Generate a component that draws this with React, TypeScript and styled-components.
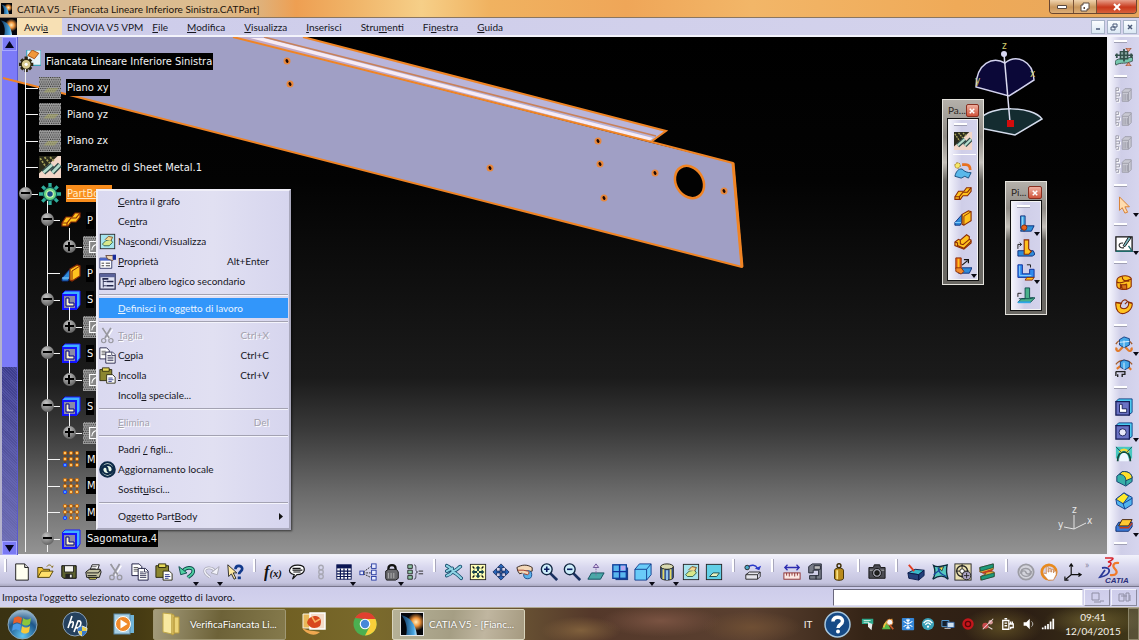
import React, { ReactNode } from 'react';
import styled, { createGlobalStyle, css } from 'styled-components';

const ui = `Lato, "Noto Sans", sans-serif`;
const treeFont = `"DejaVu Sans Condensed", "DejaVu Sans", sans-serif`;

const GlobalStyle = createGlobalStyle`
  * { box-sizing: border-box; }
  html, body { margin: 0; height: 100%; }
  #root { height: 100%; }
  body { font-family: ${ui}; font-size: 10px; color: #16161e; overflow: hidden; background: #000; }
  button { font: inherit; color: inherit; background: none; border: 0; padding: 0; margin: 0; }
  u { text-underline-offset: 1px; }
`;

/* ---------- icon artwork, 20 x 20 unless noted ---------- */

const O = '#8a2b06';
const Y = '#ffc21e';

const gridDots = (
  <g fill="#f6b04a" stroke="#7a3f08" strokeWidth="1">
    <path d="M4 4v12M10 4v12M16 4v12M4 4h12M4 10h12" fill="none" />
    {[4, 10, 16].map((x) => [4, 10, 16].map((y) => (
      <circle key={`${x}-${y}`} cx={x} cy={y} r="1.7" fill={x === 4 && y === 16 ? '#4aa0ff' : '#ffc464'} stroke={x === 4 && y === 16 ? '#1a3cff' : '#c06a14'} />
    )))}
  </g>
);

const speck = (
  <g>
    <rect width="20" height="20" fill="#9a9a9a" />
    <g stroke="#3e3e3e" strokeDasharray="1 1">
      {[0, 2, 4, 6, 8, 10, 12, 14, 16, 18].map((y) => <path key={y} d={`M${(y / 2) % 2} ${y + 0.5}h20`} />)}
    </g>
  </g>
);

const ghostBox = (
  <g fill="none" stroke="#9c9ca8">
    <path d="M8 6l3-3h7v11l-3 3H8z" fill="#c8c8d2" /><path d="M15 17V7l3-3M15 7H8" />
    <path d="M10 9v7M12 9v7M14 9v7" /><path d="M2 3v14M2 3h3v3H2M2 9h4v3H2M2 15h3v3H2" stroke="#fff" />
    <path d="M1 2v14M1 2h3v3H1M1 8h4v3H1M1 14h3v3H1" />
  </g>
);

const lBlock = (a: string, b: string) => (
  <g strokeWidth="1">
    <path d="M4 1h5v10l2 2-3 5-4-3z" fill={a} stroke="#0a2a78" />
    <path d="M8 12h11l-3 6H4l1-3z" fill={b} stroke="#0a2a78" />
    <path d="M6 2v11" stroke="#fff" opacity=".5" />
    <circle cx="8" cy="14" r="3" fill="#e8641c" stroke={O} />
  </g>
);

const art: Record<string, ReactNode> = {
  newFile: <g><path d="M3 1h10l4 4v14H3z" fill="#fffff0" stroke="#111" /><path d="M13 1v4h4" fill="#ddd" stroke="#111" /></g>,
  open: <g stroke="#4a3a00"><path d="M2 16V5h5l1 2h7v3" fill="#f3c63a" /><path d="M2 16l4-7h13l-4 7z" fill="#ffe06a" /><path d="M12 4c2-3 5-2 6 1l1-2" fill="none" stroke="#7a6000" /></g>,
  save: <g><path d="M2 3h16v14H4l-2-2z" fill="#5d6230" stroke="#000" /><path d="M5 3h10v7H5z" fill="#f4f4ee" stroke="#222" /><path d="M6 12h8v5H6z" fill="#222" /><path d="M11 13h2v3h-2z" fill="#eee" /></g>,
  print: <g stroke="#111"><path d="M7 7l2-5h8l-2 6z" fill="#fff" /><path d="M9 4h5M8 6h5" stroke="#666" /><path d="M2 10l4-3h12l1 3-2 6H3z" fill="#c4c2a2" /><path d="M3 11h13l2-3M4 14h10" fill="none" /><path d="M5 16h10l-2 2H6z" fill="#e8e060" /></g>,
  cutOff: <g fill="none" stroke="#fff" strokeWidth="1.4"><path d="M5 2l7 11M15 2L8 13" transform="translate(1 1)" /><g stroke="#98989f"><path d="M4 1l8 12M14 1L7 13" strokeWidth="2" /><circle cx="5.500" cy="16" r="2.500" /><circle cx="14" cy="16" r="2.500" /></g></g>,
  copy: <g fill="#fff" stroke="#15153a"><path d="M1 1h8l3 3v10H1z" /><path d="M3 5h5M3 7h5M3 9h5" stroke="#555" /><path d="M8 6h8l3 3v10H8z" /><path d="M15 6v4h4M10 10h4M10 12h7M10 14h7M10 16h7" stroke="#335" /></g>,
  paste: <g stroke="#26240a"><path d="M1 3h14v13H1z" fill="#8b8630" /><path d="M4 1h8v4H4z" fill="#e6d95a" /><path d="M9 9h7l3 3v7H9z" fill="#fff" /><path d="M11 13h5M11 15h6M11 17h4" stroke="#24308a" /></g>,
  undo: <g fill="none"><path d="M5 10c3-6 12-6 12-1 0 4-4 5-6 7" stroke="#0c4a4a" strokeWidth="4" /><path d="M5 10c3-6 12-6 12-1 0 4-4 5-6 7" stroke="#4fd0a2" strokeWidth="2" /><path d="M1 4l2 9 7-2z" fill="#4fd0a2" stroke="#0c4a4a" /></g>,
  redoOff: <g fill="none"><path d="M15 10C12 4 3 4 3 9c0 4 4 5 6 7" stroke="#a6a6b2" strokeWidth="3" /><path d="M15 10C12 4 3 4 3 9c0 4 4 5 6 7" stroke="#f2f2fa" strokeWidth="1.500" /><path d="M19 4l-2 9-7-2z" fill="#f2f2fa" stroke="#a6a6b2" /></g>,
  help: <g><path d="M2 2l1 13 3-3 3 6 2-1-3-6h4z" fill="#ffe9a0" stroke="#222" /><path d="M10.500 7c0-5 7.500-5 7.500-.5 0 3-3.500 3-3.500 6" fill="none" stroke="#123a8c" strokeWidth="3" /><path d="M13 15h3.500v3H13z" fill="#123a8c" /></g>,
  fx: <text x="0" y="15" fontFamily="Liberation Serif, serif" fontStyle="italic" fontSize="18" fontWeight="700" fill="#111">f<tspan fontSize="12">(x)</tspan></text>,
  comment: <g stroke="#111" strokeWidth="1.300"><path d="M7 13c-5-1-6-4-5-6 2-6 15-6 16-1 1 5-4 7-8 7l-5 5z" fill="#fff" /><path d="M5 6h9M5 8h11M6 10h8" /></g>,
  linkOff: <g fill="none" stroke="#a8a8b4" strokeWidth="1.500"><circle cx="10" cy="5" r="2.500" /><circle cx="10" cy="10" r="2.500" /><circle cx="10" cy="15" r="2.500" /></g>,
  table: <g><rect x="2" y="2" width="16" height="16" fill="#fff" stroke="#0b1654" /><rect x="2" y="2" width="16" height="4" fill="#0b1654" /><path d="M2 9h16M2 12h16M2 15h16M6 6v12M10 6v12M14 6v12" stroke="#0b1654" strokeWidth="1.300" /></g>,
  graph: <g fill="#e8ecff" stroke="#2338a0"><path d="M5 11h8M5 10l8-6M5 12l8 4" stroke="#222" strokeDasharray="2 1" /><rect x="1" y="9" width="4" height="4" /><rect x="14" y="1" width="5" height="5" /><rect x="14" y="8" width="5" height="5" /><rect x="14" y="15" width="5" height="4" /></g>,
  lock: <g stroke="#111"><path d="M6 9V6c0-5 8-5 8 0v3" fill="none" strokeWidth="2.500" /><path d="M3 9l3-2h9l2 3v7l-3 2H4l-1-2z" fill="#6a6a6e" /><path d="M6 11v6M9 11v6M12 11v6" stroke="#b8b8b8" /></g>,
  equal: <g fill="#8fc7a8" stroke="#222"><path d="M2 2h5v4H2zM2 8h5v4H2zM2 14h5v4H2z" /><path d="M9 2c4 0 0 8 4 8-4 0 0 8-4 8" fill="none" stroke="#445" /><path d="M14 9h5M14 12h5" /></g>,
  fly: <g><path d="M2 3c3 1 5 4 7 6 3 0 5-3 8-5M9 9c-2 3-4 4-7 5M9 10c3 1 6 4 9 7M8 6l-6 3" fill="none" stroke="#114a6a" strokeWidth="4" strokeLinecap="round" /><path d="M2 3c3 1 5 4 7 6 3 0 5-3 8-5M9 9c-2 3-4 4-7 5M9 10c3 1 6 4 9 7M8 6l-6 3" fill="none" stroke="#8fd4e4" strokeWidth="2.200" strokeLinecap="round" /></g>,
  fit: <g><rect x="1.500" y="1.500" width="17" height="17" fill="#ffffb4" stroke="#222" /><path d="M10 3l3 3h-2v3H9V6H7zM10 17l-3-3h2v-3h2v3h2zM3 10l3-3v2h3v2H6v2zM17 10l-3 3v-2h-3V9h3V7z" fill="#14404a" /><path d="M4 4l2 2M16 4l-2 2M4 16l2-2M16 16l-2-2" stroke="#111" strokeWidth="1.500" /></g>,
  pan: <g fill="#2a66b8" stroke="#0a1e50" strokeWidth=".8"><path d="M10 1l4 4h-3v4H9V5H6zM10 19l-4-4h3v-4h2v4h3zM1 10l4-4v3h4v2H5v3zM19 10l-4 4v-3h-4V9h4V6z" /></g>,
  rotate: <g stroke="#2a1a10"><path d="M1 5c5-3 11-4 17 0v4l-8 1-6 2-2-3z" fill="#f3d8b8" /><circle cx="13" cy="13" r="4.500" fill="#5ab0e8" stroke="#114a8a" /><path d="M2 8h6l5 1c2 1 2 3 0 4l-4-1" fill="#f3d8b8" stroke="#a03020" /></g>,
  zoomIn: <g><path d="M11 11l8 8" stroke="#1a3060" strokeWidth="3" /><circle cx="7.500" cy="7" r="6" fill="#cdeefa" stroke="#0f2440" strokeWidth="1.500" /><path d="M4.500 7h6M7.500 4v6" stroke="#0b1a60" strokeWidth="1.800" /></g>,
  zoomOut: <g><path d="M11 11l8 8" stroke="#1a3060" strokeWidth="3" /><circle cx="7.500" cy="7" r="6" fill="#cdeefa" stroke="#0f2440" strokeWidth="1.500" /><path d="M4.500 7h6" stroke="#0b1a60" strokeWidth="1.800" /></g>,
  normal: <g><path d="M1 18l4-7h14l-4 7z" fill="#4aa8a8" stroke="#0f4a5a" /><path d="M10 14V5" stroke="#806aa0" strokeDasharray="2 1" /><path d="M7 5l3-4 3 4z" fill="#e8d0f0" stroke="#604a90" /></g>,
  multi: <g><path d="M5 5h14v14H5z" fill="#1b3f86" /><rect x="2" y="2" width="15" height="15" fill="#59b6ee" stroke="#10409a" strokeWidth="1.500" /><path d="M9.500 2v15M2 9.500h15" stroke="#10309a" strokeWidth="1.500" /><path d="M11 3h5v5h-5z" fill="#b8a8f0" /></g>,
  cube: <g fill="#6acbf8" stroke="#0d3a8c"><path d="M1 7l5-6h13v12l-5 6H1z" /><path d="M1 7h13v12M14 7l5-6" fill="none" /></g>,
  shade: <g stroke="#1a1a10"><path d="M3 4v12c0 4 14 4 14 0V4" fill="#3a5a9a" /><ellipse cx="10" cy="4" rx="7" ry="3" fill="#d8d8b0" /><path d="M6 7v11M14 7v11" stroke="#e4d860" strokeWidth="2" /><path d="M10 8v11" stroke="#9ad0f0" strokeWidth="2" /></g>,
  hide: <g><rect x="1.500" y="1.500" width="17" height="17" fill="#a6e4ee" stroke="#222" /><path d="M4 13l4-4 6-1 2 3-4 4H6z" fill="#d8e88a" stroke="#245a4a" /><path d="M7 8l4-4 5 1-2 4" fill="#f0d890" stroke="#7a4a20" /></g>,
  swap: <g><rect x="1.500" y="1.500" width="17" height="17" fill="#62cfe6" stroke="#222" /><path d="M5 15l4-4h7l-3 4z" fill="#e8f0c0" stroke="#1a4a4a" /></g>,
  turntable: <g stroke="#222"><path d="M2 13l4-3h12l-3 3zM2 13v5h13v-5M15 18l3-3v-5" fill="#e4e4ea" /><path d="M4 5c4-4 9-3 11 1" fill="none" stroke="#2a3ac8" strokeWidth="1.500" /><circle cx="3.500" cy="5" r="2.500" fill="#49a8c8" /><path d="M12 6l5 2 2-5z" fill="#2a3ac8" stroke="none" /></g>,
  measure: <g><path d="M2 5h16M5 2L2 5l3 3M15 2l3 3-3 3" fill="none" stroke="#2b2bb0" strokeWidth="1.400" /><rect x="1" y="11" width="18" height="7" fill="#fbe8e4" stroke="#8a2a2a" /><path d="M4 11v3M7 11v4M10 11v3M13 11v4M16 11v3" stroke="#8a2a2a" /></g>,
  caliper: <g fill="#767a86" stroke="#1e2230"><path d="M3 4l4-3h10v17h-6v-4h3V8H8v3H3z" /><path d="M9 3h7v4H9z" fill="#bbb" /><path d="M4 14h7v4H4z" /></g>,
  weight: <g stroke="#3a2a00"><circle cx="10" cy="3" r="2.200" fill="none" strokeWidth="1.500" /><path d="M5 8c0-3 10-3 10 0v9c0 3-10 3-10 0z" fill="#b98a1c" /><path d="M8 8v10" stroke="#f8e080" strokeWidth="2" /></g>,
  camera: <g stroke="#111"><path d="M1 5h5l1-3h6l1 3h5v12H1z" fill="#4a4a52" /><path d="M2 8h16" stroke="#b8b8b8" /><circle cx="10" cy="11" r="5" fill="#9a9aa6" /><circle cx="10" cy="11" r="2.500" fill="#222" /></g>,
  mat: <g stroke="#0a1a4a"><path d="M1 11l8-4 10 1-6 5z" fill="#3ab8c8" /><path d="M1 11l12 2v6L2 17zM13 13l6-5v6l-6 5z" fill="#24407a" /><path d="M2 2l6 7" stroke="#e03a20" strokeWidth="2" /></g>,
  surf: <g stroke="#0c2a3a" strokeWidth="1.500"><path d="M3 3c5 3 9 0 15-1-1 4-1 10 1 16-5-5-11-4-17 0 3-5 3-10 1-15z" fill="#55c8c0" /><path d="M8 5c0 5 3 7 9 10M3 13l11-9" fill="none" stroke="#1a4aa0" /><path d="M9 5l5-1-2 5z" fill="#f4e050" strokeWidth=".8" /></g>,
  analysis: <g stroke="#222"><rect x="1" y="1" width="18" height="18" fill="#ece2b4" /><circle cx="9" cy="9" r="6" fill="none" strokeWidth="1.500" /><path d="M9 1v16M2 9h15" /><circle cx="9" cy="9" r="2.500" fill="#fff" /><circle cx="14" cy="14" r="4.500" fill="#b0a8c8" /><path d="M11 14h6M14 11v6" /></g>,
  draft: <g strokeWidth=".8"><path d="M2 5l15-4v6l-6 2 7 1v5L3 19v-4l6-3-7-2z" fill="#e0b23a" stroke="#5a3a10" /><path d="M2 5l15-4v4L3 9zM3 15l15-4v4L4 19z" fill="#1e9a7a" stroke="#0c4a40" /><path d="M5 11l11-3" stroke="#c83a20" strokeWidth="2" /></g>,
  updOff: <g fill="none" stroke="#9c9ca4" strokeWidth="2"><circle cx="10" cy="10" r="8.500" fill="#d4d4dc" /><path d="M4 12c0-8 11-7 11-2 0 3-5 3-5 0M16 9c0 8-11 7-11 2 0-3 5-3 5 0" strokeWidth="1.500" /></g>,
  hand: <g><circle cx="10" cy="10" r="8" fill="none" stroke="#e88a1e" strokeWidth="3" /><path d="M7 12V4h2v6h1V6h2v4h1V7h2v4l1-2h2v4l-3 6H9l-5-6 1-2z" fill="#fff" stroke="#c87a3a" strokeWidth=".8" /></g>,
  axis: <g fill="none" stroke="#111" strokeWidth="1.300"><path d="M8 1v12h11M8 13l-6 5M6 4l2-3 2 3M16 11l3 2-3 2M1 15v4h4" /></g>,

  /* vertical toolbars */
  sheet: <g stroke="#33504a"><path d="M0 15c5-6 10 0 19-6l1 5c-9 5-13 1-19 5z" fill="#77c7ae" /><path d="M0 8h20M6 4h8v8H6z" fill="#8aa8a4" strokeWidth="1.600" /><path d="M2 6v5M18 6v5M10 1v14" strokeWidth="2" /><path d="M12 0h6l-3 4zM12 20h6l-3-4z" fill="#e8a08a" stroke="#8a3a1a" strokeWidth=".8" /></g>,
  ghostBox,
  arrow: <path d="M5 1v15l3-3 3 6 3-1-3-6h5z" fill="#ffdcae" stroke="#d87a28" />,
  sketch: <g><path d="M1 2h18v16H1z" fill="#fff" stroke="#111" strokeWidth="1.400" /><path d="M1 18h18l-4-6" fill="none" stroke="#1e6a6a" strokeWidth="1.500" /><path d="M9 9c-7-1-5 7 1 5" fill="none" stroke="#333" strokeWidth="1.300" /><path d="M9 12l6-10 3 1-7 10z" fill="#7ab8c0" stroke="#111" /></g>,
  hopper: <g fill={Y} stroke={O} strokeWidth="1.200"><path d="M2 9c0-6 12-8 16-3v9c-4 5-16 4-16-1z" /><path d="M2 10c4 3 8-1 16-3M8 4c0 4 2 5 8 5M6 12v5l7-5" fill="none" /><path d="M7 13h6v5H8z" fill="#d8741a" /></g>,
  rolled: <g fill={Y} stroke={O} strokeWidth="1.200"><path d="M1 6c-1 9 4 14 10 12 5-1 9-7 8-11l-4-1c1 4-2 7-5 7-4 0-5-2-3-6z" /><path d="M1 6l6 1c1-4 5-5 7-2l-3 3M14 5l5 2" fill="none" /></g>,
  fold: <g><path d="M1 9c3-5 6-5 9-5s6 0 9 5" fill="none" stroke="#a05a2a" strokeWidth="1.500" /><path d="M2 13c-2 3 2 5 4 2l3-3M18 13c2 3-2 5-4 2l-3-3" fill="none" stroke="#e07a2a" strokeWidth="2.500" /><path d="M5 4l5-3 6 2v7l-6 3-5-3z" fill="#46a8e8" stroke="#103a80" /><path d="M10 5v8M5 7l11-1" stroke="#e4f4ff" /></g>,
  foldView: <g><path d="M2 11l4-3M18 12l-4-4" fill="none" stroke="#e07a2a" strokeWidth="2.500" /><path d="M1 6c4-6 14-6 18 0" fill="none" stroke="#a05a2a" strokeWidth="1.500" /><path d="M6 3l4-2 6 2v6l-5 3-5-3z" fill="#46a8e8" stroke="#103a80" /><path d="M10 4v8" stroke="#e4f4ff" /><path d="M1 14h10v3H8v3M3 17v3M1 14v5" fill="none" stroke="#222" strokeWidth="1.500" /></g>,
  cutout: <g><path d="M1 4l3-3h15v15l-4 3z" fill="#4fd0f4" stroke="#0a3a80" /><rect x="1" y="4" width="15" height="15" fill="#6a72c4" stroke="#141c58" strokeWidth="1.400" /><path d="M5 7h3v5h5v4H5z" fill="#fff" stroke="#141c58" /></g>,
  holeCut: <g><path d="M1 4l3-3h15v15l-4 3z" fill="#4fd0f4" stroke="#0a3a80" /><rect x="1" y="4" width="15" height="15" fill="#6a72c4" stroke="#141c58" strokeWidth="1.400" /><circle cx="8.500" cy="11.500" r="4" fill="#e8e8fa" stroke="#141c58" /></g>,
  corner: <g><path d="M1 2h18v13H1z" fill="#48c8c0" /><path d="M3 18c0-7 3-10 7-10s7 3 7 10" fill="none" stroke="#114a3a" strokeWidth="2" /><path d="M5 18c0-7 2-9 5-9s5 2 5 9z" fill="#eef6ff" /><path d="M5 8c3-4 7-4 10 0" fill="none" stroke="#f4d83a" strokeWidth="2.500" /><path d="M1 2l6 6M19 2l-6 6" stroke="#1a4a5a" /></g>,
  round: <g stroke="#0c3a6a"><path d="M2 8l6-5c7-1 11 3 11 7v4l-7 5-10-5z" fill="#37b0a8" /><path d="M8 3c7-1 11 3 11 7l-7 3c0-4-2-7-7-7z" fill="#ffe02a" /><path d="M12 13v5" /></g>,
  chamfer: <g stroke="#0c3a8a"><path d="M1 8l9-7 9 5v8l-8 5-9-5z" fill="#52b4ee" /><path d="M1 8l9-7 5 4-6 8z" fill="#ffe92a" /><path d="M9 13l10-6M9 13l2 6" /></g>,
  stamp: <g stroke="#3a1a0a"><path d="M1 12l3-5h15v5l-4 5H1z" fill="#3a7ad8" stroke="#0c2a6a" /><path d="M4 11l4-7h11l-4 7z" fill="#ffc832" /><path d="M5 13h10l4-5" fill="none" stroke="#c83a1a" strokeWidth="1.500" /></g>,

  /* palettes */
  params: <g><path d="M0 0h20v20H0z" fill="#f2d6c8" /><path d="M0 0h17L0 16z" fill="#2a2a1c" /><path d="M1 2l6 9M5 1l6 7M10 1l4 4" stroke="#a8a45a" strokeDasharray="2 1" strokeWidth="1.500" /><path d="M4 15L12 8M12 15L19 8" stroke="#2f4a48" strokeWidth="5" /><path d="M4 15L12 8M12 15L19 8" stroke="#b4dccc" strokeWidth="2.500" /></g>,
  recognise: <g stroke="#114a7a"><path d="M1 17c1-5 4-9 8-8 3 3 6 4 10 4l-3 6-4-2-4 2z" fill="#5ab8ea" /><path d="M9 4h4c4 0 5 3 5 6" fill="none" stroke="#e8701e" strokeWidth="3" /><circle cx="4" cy="5" r="3" fill="#f6e86a" stroke="#8a5a10" strokeDasharray="2 1" /></g>,
  wall: <g fill={Y} stroke={O} strokeWidth="1.200"><path d="M1 13l4-6h6l3-4h5v4l-4 5h-5l-3 4H1z" /><path d="M1 13h5l4-5h5l4-5M6 13v3" fill="none" /></g>,
  wallEdge: <g><path d="M1 15L9 6v8l-2 4H1z" fill="#2e8ad8" stroke="#0c2a78" /><path d="M1 15h7" stroke="#8ad0ff" /><path d="M9 6l7-4 3 1v10l-8 5-2-1z" fill={Y} stroke={O} strokeWidth="1.200" /><path d="M11 18V8l8-5" fill="none" stroke={O} /></g>,
  extrude: <g fill={Y} stroke={O} strokeWidth="1.200"><path d="M1 10l4-3 2 1 7-6 3 2v3l2 1v3l-8 7-10-4z" /><path d="M1 10l3 1v3l7 3 8-8M7 8v4l3 1 7-6" fill="none" /></g>,
  bend: <g><path d="M2 1h6v12H2z" fill="#e8641c" stroke={O} /><path d="M5 2v11" stroke={Y} strokeWidth="2" /><path d="M9 12h11l-3 6H5z" fill="#2e8ad8" stroke="#0c2a78" /><path d="M2 12l6 0 3 4-3 3-6-3z" fill="#f08a2a" stroke={O} /><path d="M9 9l6-5M11 3h5v4" fill="none" stroke="#111" strokeWidth="1.300" /></g>,
  bend1: lBlock('#4ab0ea', '#2e90d8'),
  bend2: <g><path d="M1 13h17l2 4-3 2H1z" fill="#2e8ad8" stroke="#0c2a78" /><path d="M8 1h5v10l3 3-3 3H8z" fill={Y} stroke={O} strokeWidth="1.200" /><path d="M1 11V6h4M3 4l2 2-2 2" fill="none" stroke="#111" /></g>,
  bend3: <g stroke="#0c2a98"><path d="M1 2h5v10h8V7h5v9H1z" fill="#2e8aee" /><path d="M3 3v11h13" fill="none" stroke="#9ad8ff" /><path d="M11 16h8l-2 3h-8z" fill={Y} stroke={O} /><path d="M11 2h4v3" fill="none" stroke="#111" /></g>,
  bend4: <g stroke="#0c4a4a"><path d="M9 1h5v11h6l-5 5H1l4-4h4z" fill="#48b08a" /><path d="M2 13h12l4-1" fill="none" /><path d="M1 17h14" stroke="#2ea8e8" strokeWidth="2" /><path d="M1 11V7h4" fill="none" stroke="#111" /></g>,

  /* menu + tree */
  props: <g><path d="M1 6h14v12H1z" fill="#fff" stroke="#222a5a" /><path d="M1 6h14v3H1z" fill="#4a64c8" /><path d="M3 12h3M8 12h5M3 15h3M8 15h5" stroke="#222" /><path d="M8 3h8l3 3-3 3-6-2z" fill="#f0d8b8" stroke="#5a3a2a" /><path d="M16 2h4v6h-4z" fill="#1a2a9a" /></g>,
  subtree: <g><rect x="1" y="1" width="18" height="18" fill="#dfe2f4" stroke="#22264a" strokeWidth="1.400" /><path d="M1 1h18v4H1z" fill="#5a629a" /><path d="M5 7v10M5 10h4M5 15h4" stroke="#22264a" /><path d="M4 6h7v2H4zM9 9h8v2H9zM9 14h8v2H9z" fill="#22264a" /></g>,
  update: <g fill="none"><circle cx="10" cy="10" r="8.500" fill="#e8f8e8" stroke="#0d2a48" strokeWidth="2.500" /><path d="M3 13c-1-9 11-11 13-4 1 5-6 6-6 1M17 7c1 9-11 11-13 4-1-5 6-6 6-1" stroke="#0d2a48" strokeWidth="2.500" /></g>,
  planeTint: <g>{speck}<path d="M4 14l4-4h10l-4 4z" fill="#a8a860" opacity=".55" /></g>,
  gearGreen: <g><g stroke="#2fae9c" strokeWidth="3"><path d="M10 0v20M0 10h20M3 3l14 14M17 3L3 17" /></g><circle cx="10" cy="10" r="6" fill="#6cd888" stroke="#0e5a5a" /><circle cx="10" cy="10" r="3" fill="#1a4a8a" stroke="#d8ffb0" /></g>,
  root: <g><path d="M7 0h13v14H7z" fill="#e8f4fa" stroke="#3aa0b8" /><path d="M8 5l4-5 6 3-4 5z" fill="#f0983a" stroke="#a04a10" strokeWidth=".8" /><g stroke="#2a2410" strokeWidth="3"><path d="M6.500 6v14M0 13h13M2 8.500l9 9M11 8.500l-9 9" /></g><circle cx="6.500" cy="13" r="4.500" fill="#d8ca90" stroke="#2a2410" /><circle cx="6.500" cy="13" r="1.500" fill="#fff" /></g>,
  sketchPlane: <g>{speck}<path d="M6 5h10v10H6z" fill="#888" stroke="#fff" /><path d="M8 13c0-4 3-5 6-6" fill="none" stroke="#fff" /></g>,
  sago: <g><path d="M1 4l3-3h15v14l-3 4z" fill="#3fb0ff" stroke="#1a1aff" /><rect x="2" y="5" width="13" height="14" fill="#8a8aa8" stroke="#1414ff" strokeWidth="2" /><path d="M5 8h3v5h5v3H5z" fill="#fff8c8" stroke="#000080" /></g>,
  pattern: gridDots,
};

const Svg = styled.svg<{ $w?: number; $h?: number }>`
  display: block;
  flex: none;
  width: ${(p) => p.$w ?? 18}px;
  height: ${(p) => p.$h ?? p.$w ?? 18}px;
`;

const Icon = ({ name, w, h }: { name: string; w?: number; h?: number }) => (
  <Svg $w={w} $h={h} viewBox="0 0 20 20" aria-hidden="true">{art[name]}</Svg>
);

/* ---------- shell ---------- */

const Shell = styled.div`
  display: flex;
  flex-direction: column;
  width: 100%;
  height: 100vh;
  min-height: 560px;
  overflow: hidden;
  background: #d2d1ea;
`;

const TitleBar = styled.header`
  display: flex;
  align-items: center;
  height: 18px;
  flex: none;
  padding: 0 2px 0 1px;
  gap: 5px;
  border-bottom: 1px solid #8a7660;
  background: linear-gradient(90deg, #d9bc98 0, #dcbc8e 18%, #e0b078 23%, #ee9f52 26%, #f0b468 31%, #f6cf88 37%, #f0b260 43%, #efa658 55%, #f2b668 66%, #efaa58 84%, #e7a75c 100%);
`;

const Title = styled.h1`
  flex: 1;
  margin: 0;
  font-size: 10px;
  font-weight: 400;
  line-height: 16px;
  white-space: nowrap;
  color: #1c140c;
`;

const WindowButtons = styled.div`
  display: flex;
  align-self: flex-start;
  height: 14px;
  border: 1px solid #6a4630;
  border-top: 0;
  border-radius: 0 0 4px 4px;
  overflow: hidden;
`;

const WindowButton = styled.button<{ $close?: boolean }>`
  display: grid;
  place-items: center;
  width: ${(p) => (p.$close ? 40 : 23)}px;
  background: ${(p) => (p.$close ? 'linear-gradient(#e8a08a, #c8381c 55%, #d8603a)' : 'linear-gradient(#f0d4ae, #c8965c 55%, #dcae78)')};
  & + & { border-left: 1px solid #7a5236; }
`;

const MenuBar = styled.nav`
  display: flex;
  align-items: stretch;
  height: 19px;
  flex: none;
  border-bottom: 2px solid #f3f3fb;
  background: linear-gradient(90deg, #cdccea, #d4d3ec);
`;

const MenuButton = styled.button<{ $first?: boolean; $tight?: boolean }>`
  padding: 0 10px 0 9px;
  line-height: 16px;
  white-space: nowrap;
  ${(p) => p.$first && css`padding: 0 14px 0 7px; background: #f7e0b4;`}
  ${(p) => p.$tight && css`padding: 0 0 0 5px;`}
`;

const MdiButtons = styled.div`
  display: flex;
  gap: 2px;
  margin-left: auto;
  padding: 2px 2px 1px 0;
`;

const MdiButton = styled.button`
  display: grid;
  place-items: center;
  width: 14px;
  border: 1px solid #a8b4c8;
  background: linear-gradient(#fbfdff, #dbe8f4);
`;

const Workspace = styled.main`
  position: relative;
  display: flex;
  flex: 1;
  min-height: 0;
`;

const ScrollBar = styled.div`
  display: flex;
  flex-direction: column;
  width: 18px;
  flex: none;
  border-left: 2px solid #b4b2cc;
  border-right: 1px solid #5a5ad0;
`;

const ScrollButton = styled.button`
  display: grid;
  place-items: center;
  height: 14px;
  background: #7a7af4;
  border: 1px solid #a8a8ff;
`;

const ScrollThumb = styled.div`
  flex: 317;
  background: #7b7af8;
`;

const ScrollTrack = styled.div`
  flex: 174;
  background:
    repeating-linear-gradient(45deg, #8080d840 0 1px, transparent 1px 2px),
    linear-gradient(#3c3c8c, #6c6cb0);
`;

const Viewport = styled.section`
  position: relative;
  flex: 1;
  min-width: 0;
  border-right: 2px solid #f0f0f6;
  border-bottom: 1px solid #f0f0f6;
  background: linear-gradient(#000 0, #030303 28%, #121212 52%, #1b1b1b 66%, #3a3a3a 76%, #6a6a6a 88%, #939393 100%);
`;

const Plate = styled.svg`
  position: absolute;
  left: 0;
  top: 0;
  width: 1139px;
  height: 518px;
  pointer-events: none;
`;

const Compass = styled.svg`
  position: absolute;
  right: 62px;
  top: 2px;
  width: 80px;
  height: 100px;
`;

const Triad = styled.svg`
  position: absolute;
  right: 8px;
  bottom: 20px;
  width: 44px;
  height: 30px;
`;

/* ---------- specification tree ---------- */

const TreeLayer = styled.div`
  position: absolute;
  left: 19px;
  top: 0;
  bottom: 3px;
  width: 240px;
`;

const Tree = styled.ul`
  position: absolute;
  left: 0;
  top: 11px;
  bottom: 0;
  margin: 0;
  padding: 0;
  list-style: none;
  display: grid;
  grid-auto-rows: 1fr;
  font-family: ${treeFont};
  font-size: 11px;
`;

const TreeRow = styled.li`
  display: flex;
  align-items: center;
  min-height: 0;
`;

const Guide = styled.span<{ $last?: boolean; $stop?: boolean }>`
  position: relative;
  align-self: stretch;
  flex: none;
  width: ${(p) => (p.$last ? 19 : 22)}px;
  &::before {
    content: '';
    position: absolute;
    left: 6px;
    top: -6px;
    bottom: ${(p) => (p.$stop ? '50%' : '0')};
    width: 1px;
    background: #f4f4f4;
  }
  ${(p) => p.$last && css`
    &::after {
      content: '';
      position: absolute;
      left: 6px;
      right: 0;
      top: 50%;
      height: 1px;
      background: #f4f4f4;
    }
  `}
`;

const Expander = styled.button<{ $plus?: boolean }>`
  position: absolute;
  z-index: 1;
  left: 0;
  top: 50%;
  width: 13px;
  height: 13px;
  margin-top: -7px;
  border-radius: 50%;
  background: radial-gradient(circle at 40% 30%, #c4c4c4, #6a6a6a 70%);
  &::before {
    content: '';
    position: absolute;
    left: 2px;
    right: 2px;
    top: 5px;
    height: 2px;
    background: #000;
  }
  ${(p) => p.$plus && css`
    &::after {
      content: '';
      position: absolute;
      top: 2px;
      bottom: 2px;
      left: 5px;
      width: 2px;
      background: #000;
    }
  `}
`;

const Label = styled.span<{ $tone: 'plain' | 'box' | 'selected' }>`
  margin-left: 4px;
  padding: 0 1px;
  line-height: 17px;
  white-space: nowrap;
  color: #f2f2f2;
  ${(p) => p.$tone === 'box' && css`background: #000;`}
  ${(p) => p.$tone === 'selected' && css`background: #f98d1c; color: #ffe9c4; text-decoration: underline;`}
`;

type Node = { label: string; icon: string; level: number; tone?: 'plain' | 'box' | 'selected'; sign?: '+' | '-' };

const nodes: Node[] = [
  { label: 'Fiancata Lineare Inferiore Sinistra', icon: 'root', level: 0, tone: 'box' },
  { label: 'Piano xy', icon: 'planeTint', level: 1, tone: 'box' },
  { label: 'Piano yz', icon: 'planeTint', level: 1 },
  { label: 'Piano zx', icon: 'planeTint', level: 1 },
  { label: 'Parametro di Sheet Metal.1', icon: 'params', level: 1 },
  { label: 'PartBody', icon: 'gearGreen', level: 1, tone: 'selected', sign: '-' },
  { label: 'P', icon: 'wall', level: 2, tone: 'box', sign: '-' },
  { label: '', icon: 'sketchPlane', level: 3, sign: '+' },
  { label: 'P', icon: 'wallEdge', level: 2, tone: 'box' },
  { label: 'S', icon: 'sago', level: 2, tone: 'box', sign: '-' },
  { label: '', icon: 'sketchPlane', level: 3, sign: '+' },
  { label: 'S', icon: 'sago', level: 2, tone: 'box', sign: '-' },
  { label: '', icon: 'sketchPlane', level: 3, sign: '+' },
  { label: 'S', icon: 'sago', level: 2, tone: 'box', sign: '-' },
  { label: '', icon: 'sketchPlane', level: 3, sign: '+' },
  { label: 'M', icon: 'pattern', level: 2, tone: 'box' },
  { label: 'M', icon: 'pattern', level: 2, tone: 'box' },
  { label: 'M', icon: 'pattern', level: 2, tone: 'box' },
  { label: 'Sagomatura.4', icon: 'sago', level: 2, tone: 'box', sign: '-' },
];

const sizeByLevel = [22, 24, 22, 24];

const TreeItem = ({ node }: { node: Node }) => (
  <TreeRow>
    {Array.from({ length: node.level }, (_, i) => {
      const last = i === node.level - 1;
      return (
        <Guide key={i} $last={last} $stop={last && node.level === 3}>
          {last && node.sign && <Expander $plus={node.sign === '+'} aria-label={node.sign === '+' ? 'Espandi' : 'Comprimi'} />}
        </Guide>
      );
    })}
    <Icon name={node.icon} w={sizeByLevel[node.level]} h={node.level === 2 ? 20 : 22} />
    {node.label && <Label $tone={node.tone ?? 'plain'}>{node.label}</Label>}
  </TreeRow>
);

/* ---------- context menu ---------- */

const ContextMenu = styled.div`
  position: absolute;
  left: 96px;
  top: 152px;
  z-index: 5;
  width: 195px;
  padding: 0 1px 2px;
  border: 2px solid #f0eff8;
  border-right-color: #a9a8bc;
  border-bottom-color: #a9a8bc;
  background: linear-gradient(90deg, #dad9f0, #e1e0f2 60%, #d6d5ee);
  box-shadow: 1px 1px 2px #0009;
`;

const MenuItem = styled.button<{ $active?: boolean }>`
  display: flex;
  align-items: center;
  width: 100%;
  height: 20px;
  text-align: left;
  line-height: 18px;
  ${(p) => p.$active && css`background: #3296fa; color: #eaf4ff;`}
  &:disabled { color: #a3a1ac; text-shadow: 1px 1px 0 #fff; }
`;

const IconSlot = styled.span`
  width: 19px;
  flex: none;
`;

const Shortcut = styled.span`
  margin-left: auto;
  padding-right: 19px;
`;

const Submenu = styled.span`
  margin-left: auto;
  padding-right: 5px;
`;

const Rule = styled.hr`
  height: 2px;
  margin: 3px 0 2px;
  border: 0;
  border-top: 1px solid #a3a2b2;
  border-bottom: 1px solid #f4f4fc;
`;

type Entry = { text: ReactNode; icon?: string; keys?: string; active?: boolean; off?: boolean; sub?: boolean };
const entries: (Entry | null)[] = [
  { text: <><u>C</u>entra il grafo</> },
  { text: <>Ce<u>n</u>tra</> },
  { text: <>Na<u>s</u>condi/Visualizza</>, icon: 'hide' },
  { text: <><u>P</u>roprietà</>, icon: 'props', keys: 'Alt+Enter' },
  { text: <>Ap<u>r</u>i albero logico secondario</>, icon: 'subtree' },
  null,
  { text: <><u>D</u>efinisci in oggetto di lavoro</>, active: true },
  null,
  { text: <><u>T</u>aglia</>, icon: 'cutOff', keys: 'Ctrl+X', off: true },
  { text: <>C<u>o</u>pia</>, icon: 'copy', keys: 'Ctrl+C' },
  { text: <><u>I</u>ncolla</>, icon: 'paste', keys: 'Ctrl+V' },
  { text: <>Incoll<u>a</u> speciale...</> },
  null,
  { text: <><u>E</u>limina</>, keys: 'Del', off: true },
  null,
  { text: <>Padri <u>/</u> figli...</> },
  { text: <>A<u>g</u>giornamento locale</>, icon: 'update' },
  { text: <>Sostit<u>u</u>isci...</> },
  null,
  { text: <>Oggetto Part<u>B</u>ody</>, sub: true },
];

/* ---------- tool bars ---------- */

const Tool = styled.button`
  position: relative;
  display: grid;
  place-items: center;
  flex: 1;
  min-width: 0;
  min-height: 0;
`;

const Drop = styled.span`
  position: absolute;
  right: 0;
  bottom: 0;
  border: 3px solid transparent;
  border-top: 4px solid #0a0a14;
  border-bottom: 0;
`;

const SideBar = styled.aside`
  display: flex;
  flex-direction: column;
  align-items: stretch;
  width: 30px;
  flex: none;
  padding-bottom: 4px;
  background: linear-gradient(90deg, #f4f4fc, #cfcee8 40%, #d6d5ee);
`;

const Grip = styled.span<{ $size: number }>`
  flex: none;
  display: flex;
  align-items: center;
  height: ${(p) => p.$size}px;
  padding-left: 5px;
  &::before {
    content: '';
    width: 13px;
    height: 2px;
    background: #fff;
    border-bottom: 1px solid #a0a0b4;
  }
`;

const BottomBar = styled.div`
  display: flex;
  align-items: stretch;
  height: 32px;
  flex: none;
  padding: 3px 0 0;
  border-bottom: 1px solid #77758c;
  background: linear-gradient(#f2f2fb, #d8d7ee 40%, #c4c3de 90%, #a9a8c0);
`;

const Divider = styled.span<{ $w?: number }>`
  flex: none;
  width: ${(p) => p.$w ?? 15}px;
  display: flex;
  justify-content: center;
  align-items: flex-start;
  padding-top: 1px;
  &::before {
    content: '';
    width: 2px;
    height: 13px;
    background: #fff;
    border-right: 1px solid #a8a7bc;
  }
`;

const More = styled.span`
  width: 12px;
  line-height: 12px;
  color: #8886a0;
`;

const StatusBar = styled.footer`
  display: flex;
  align-items: center;
  gap: 1px;
  height: 20px;
  flex: none;
  padding: 0 2px;
  background: linear-gradient(#cdccea, #d4d3ee);
`;

const StatusText = styled.label`
  flex: 1;
  line-height: 18px;
`;

const PowerInput = styled.input`
  flex: none;
  width: 22%;
  height: 17px;
  padding: 0 4px;
  border: 1px solid #6a687c;
  border-right-color: #e0e0f0;
  border-bottom-color: #e0e0f0;
  background: #fff;
  font: inherit;
`;

const StatusButton = styled.button`
  display: grid;
  place-items: center;
  width: 26px;
  height: 17px;
  border: 1px solid #f2f2fc;
  border-right-color: #8a899e;
  border-bottom-color: #8a899e;
`;

type ToolSpec = string | [string];
const ToolSet = ({ items }: { items: ToolSpec[] }) => (
  <>
    {items.map((it, i) => {
      const name = typeof it === 'string' ? it : it[0];
      return (
        <Tool key={i} aria-label={name}>
          <Icon name={name} />
          {typeof it !== 'string' && <Drop />}
        </Tool>
      );
    })}
  </>
);

const bottomGroups: ToolSpec[][] = [
  ['newFile', 'open', 'save', 'print', 'cutOff', 'copy', 'paste', ['undo'], ['redoOff'], 'help'],
  ['fx', 'comment', 'linkOff', ['table'], 'graph', ['lock'], 'equal'],
  ['fly', 'fit', 'pan', 'rotate', 'zoomIn', 'zoomOut', 'normal', 'multi', ['cube'], ['shade'], 'hide', 'swap'],
  ['turntable'],
  ['measure', 'caliper', 'weight'],
  ['camera'],
  ['mat', 'surf', 'analysis', 'draft'],
  ['updOff', 'hand', 'axis'],
];

const sideGroups: ToolSpec[][] = [
  ['sheet'],
  ['ghostBox', 'ghostBox', 'ghostBox', 'ghostBox'],
  [['arrow']],
  [['sketch']],
  ['hopper', 'rolled'],
  [['fold'], 'foldView'],
  ['cutout', ['holeCut'], 'corner', 'round', 'chamfer', ['stamp']],
];

/* ---------- floating palettes ---------- */

const Palette = styled.div<{ $right: number; $top: number }>`
  position: absolute;
  z-index: 3;
  right: ${(p) => p.$right}px;
  top: ${(p) => p.$top}px;
  width: 42px;
  padding: 3px 4px 3px;
  border: 1px solid #e4e2dc;
  background: linear-gradient(#b4b0aa, #8f8b85 20%, #c4c0ba 34%, #6a6863 44%, #6a6863);
`;

const PaletteTitle = styled.div`
  display: flex;
  align-items: center;
  justify-content: space-between;
  height: 15px;
  padding-left: 1px;
  line-height: 13px;
  color: #2a2622;
`;

const PaletteClose = styled.button`
  display: grid;
  place-items: center;
  width: 14px;
  height: 13px;
  border: 1px solid #8a3020;
  border-radius: 2px;
  background: linear-gradient(#eeb0a0, #d0553c);
`;

const PaletteBody = styled.div`
  display: flex;
  flex-direction: column;
  border: 1px solid #111;
  outline: 1px solid #f4f4f4;
  outline-offset: -2px;
  padding: 0 1px 2px;
  background: linear-gradient(90deg, #f6f6fd, #cfcee8 45%, #d4d3ec);
`;

const PaletteTool = styled(Tool)`
  flex: none;
  height: 24px;
`;

const PaletteRule = styled.span`
  height: 4px;
  margin: 1px 1px 0 4px;
  border-top: 1px solid #fff;
`;

const CloseMark = ({ w = 8 }: { w?: number }) => (
  <Svg $w={w} viewBox="0 0 8 8"><path d="M1 1l6 6M7 1L1 7" stroke="#fff" strokeWidth="2" /></Svg>
);

/* ---------- task bar ---------- */

const TaskBar = styled.div`
  display: flex;
  align-items: center;
  height: 33px;
  flex: none;
  padding-left: 6px;
  border-top: 1px solid #b0a890;
  color: #f4f1e8;
  background:
    radial-gradient(ellipse 40px 14px at 51% 70%, #80603c 0, transparent 100%),
    radial-gradient(ellipse 60px 16px at 58% 40%, #7a5342 0, transparent 100%),
    radial-gradient(ellipse 50px 16px at 66% 60%, #6f4f34 0, transparent 100%),
    radial-gradient(ellipse 40px 20px at 88% 60%, #5a4a22 0, transparent 100%),
    radial-gradient(ellipse 50px 16px at 96% 40%, #66592c 0, transparent 100%),
    linear-gradient(90deg, #3a3212 0, #453a12 12%, #6d5c20 22%, #7a6a2c 33%, #6a5434 45%, #54382a 52%, #5a4030 66%, #352416 76%, #2c1e14 90%, #403818 100%);
`;

const Launcher = styled.button<{ $w: number }>`
  display: grid;
  place-items: center;
  flex: none;
  width: ${(p) => p.$w}px;
  height: 32px;
`;

const TaskGap = styled.span<{ $w?: number }>`
  flex: none;
  width: ${(p) => p.$w ?? 17}px;
`;

const TaskButton = styled.button<{ $active?: boolean }>`
  display: flex;
  align-items: center;
  gap: 5px;
  flex: none;
  width: 133px;
  height: 31px;
  padding: 0 7px;
  border: 1px solid ${(p) => (p.$active ? '#d8d4bc' : '#a09874')};
  border-radius: 2px;
  color: #fff;
  text-shadow: 0 0 2px #0008;
  white-space: nowrap;
  background: ${(p) => (p.$active ? 'linear-gradient(100deg, #b6b298, #a59e84 45%, #c0b6a0 70%, #a59a80)' : 'linear-gradient(100deg, #a49c7c, #6d6238 50%, #857a4c)')};
`;

const Tray = styled.div`
  display: flex;
  align-items: center;
  align-self: stretch;
  margin-left: auto;
`;

const TrayItem = styled.span<{ $w?: number }>`
  display: grid;
  place-items: center;
  width: ${(p) => p.$w ?? 20}px;
`;

const Clock = styled.time`
  width: 70px;
  text-align: center;
  line-height: 14px;
`;

const ShowDesktop = styled.button`
  align-self: stretch;
  width: 11px;
  border: 1px solid #8a8468;
  background: #ffffff22;
`;

const CatiaLogo = ({ w }: { w: number }) => (
  <Svg $w={w} viewBox="0 0 24 24">
    <defs>
      <radialGradient id={`glow${w}`}>
        <stop offset="0" stopColor="#fff0c0" />
        <stop offset=".45" stopColor="#f0943a" />
        <stop offset="1" stopColor="#f0943a" stopOpacity="0" />
      </radialGradient>
      <linearGradient id={`edge${w}`}>
        <stop offset="0" stopColor="#0a2a50" />
        <stop offset=".8" stopColor="#4aa8e4" />
        <stop offset="1" stopColor="#c8ecff" />
      </linearGradient>
    </defs>
    <rect width="24" height="24" fill="#04060c" />
    <circle cx="16" cy="10" r="9" fill={`url(#glow${w})`} />
    <path d="M1 3c9 2 15 9 16 21H6C8 16 6 8 1 3z" fill={`url(#edge${w})`} />
    <path d="M0 5c4 5 6 11 5 19H0z" fill="#04060c" />
    <rect x=".5" y=".5" width="23" height="23" fill="none" stroke="#e8e8e8" strokeWidth={w > 20 ? 1 : 0} />
  </Svg>
);

const DsLogo = styled.svg`
  flex: none;
  width: 38px;
  height: 28px;
  margin: -1px 4px 0 0;
  overflow: visible;
`;

const trayArt: ReactNode[] = [
  <g><path d="M1 2h13v6H1z" fill="#2ea88c" /><path d="M3 4h8M3 6h6" stroke="#d8f4e8" /><path d="M8 6l5 2-1 7-4-4z" fill="#e8ecec" /></g>,
  <g><path d="M1 14L6 4l5 10z" fill="#58b848" /><path d="M3 12c2-7 6-9 10-9" fill="none" stroke="#f2c040" strokeWidth="2" /><circle cx="10" cy="6" r="3.500" fill="#f4f4f4" stroke="#d87a2a" /><path d="M10 9l4 5" stroke="#c85a2a" strokeWidth="2" /></g>,
  <g><rect x="1" y="1" width="14" height="14" rx="1" fill="#3486d8" /><path d="M8 2v12M3 5l10 6M13 5L3 11M6 3l2 2 2-2M6 13l2-2 2 2" stroke="#fff" fill="none" strokeWidth="1.300" /></g>,
  <g><circle cx="8" cy="8" r="7" fill="#3aa0b8" /><path d="M3 7c3-4 7-4 10 0M5 9c2-3 4-3 6 0" fill="none" stroke="#fff" strokeWidth="1.500" /><circle cx="8" cy="11" r="1.300" fill="#fff" /></g>,
  <g><path d="M1 4h8v7H1z" fill="#16202e" stroke="#5aa8e8" /><path d="M7 6h8v6H7z" fill="#cfe0f0" stroke="#2a5a9a" /><path d="M4 13h7" stroke="#ddd" /></g>,
  <g><circle cx="8" cy="8" r="6.500" fill="#c4161c" /><circle cx="8" cy="8" r="3" fill="none" stroke="#5a0608" strokeWidth="1.500" /></g>,
  <g><circle cx="5" cy="10" r="3.500" fill="#c8484a" /><circle cx="11" cy="6" r="2.500" fill="#d89a9a" /><path d="M2 14l12-12M8 11l5 3" stroke="#e8dcdc" strokeWidth="1.200" /></g>,
  <g fill="none" stroke="#fff" strokeWidth="1.500"><path d="M2 4h7v10H2z" /><path d="M4 2h3M4 7h3M4 10h3" /><path d="M9 8h5v4h-3v2M11 5v3M13 5v3" /></g>,
  <g><path d="M3 6h3l4-4v12l-4-4H3z" fill="#fff" /><path d="M12 5c2 2 2 4 0 6" fill="none" stroke="#ccc" /></g>,
  <g fill="#fff"><path d="M1 12h2v2H1zM4 10h2v4H4zM7 8h2v6H7zM10 5h2v9h-2zM13 2h2v12h-2z" /></g>,
];

export default function App() {
  return (
    <>
      <GlobalStyle />
      <Shell>
        <TitleBar>
          <CatiaLogo w={11} />
          <Title>CATIA V5 - [Fiancata Lineare Inferiore Sinistra.CATPart]</Title>
          <WindowButtons>
            <WindowButton aria-label="Riduci a icona"><Svg $w={10} $h={4} viewBox="0 0 10 4"><path d="M.5.5h9v3h-9z" fill="#fff" stroke="#5a4a40" /></Svg></WindowButton>
            <WindowButton aria-label="Ripristina"><Svg $w={10} viewBox="0 0 10 10"><path d="M3 1h6v6H7v2H1V3h2z" fill="#fff" stroke="#5a4a40" /><path d="M3.500 5h1.500v2H3.500z" fill="#5a4a40" /></Svg></WindowButton>
            <WindowButton $close aria-label="Chiudi"><CloseMark /></WindowButton>
          </WindowButtons>
        </TitleBar>

        <MenuBar>
          <CatiaLogo w={17} />
          <MenuButton $first>Avvi<u>a</u></MenuButton>
          <MenuButton $tight>ENOVIA V5 VPM</MenuButton>
          <MenuButton><u>F</u>ile</MenuButton>
          <MenuButton><u>M</u>odifica</MenuButton>
          <MenuButton><u>V</u>isualizza</MenuButton>
          <MenuButton><u>I</u>nserisci</MenuButton>
          <MenuButton>Stru<u>m</u>enti</MenuButton>
          <MenuButton>Fi<u>n</u>estra</MenuButton>
          <MenuButton><u>G</u>uida</MenuButton>
          <MdiButtons>
            <MdiButton aria-label="Riduci documento"><Svg $w={8} viewBox="0 0 8 8"><path d="M2 6h4" stroke="#4a5a78" strokeWidth="1.500" /></Svg></MdiButton>
            <MdiButton aria-label="Ripristina documento"><Svg $w={8} viewBox="0 0 8 8"><path d="M3 1h4v3H3zM1 4h4v3H1z" fill="none" stroke="#4a5a78" /></Svg></MdiButton>
            <MdiButton aria-label="Chiudi documento"><Svg $w={8} viewBox="0 0 8 8"><path d="M2 2l4 4M6 2L2 6" stroke="#4a5a78" strokeWidth="1.500" /></Svg></MdiButton>
          </MdiButtons>
        </MenuBar>

        <Workspace>
          <ScrollBar>
            <ScrollButton aria-label="Scorri in alto"><Svg $w={9} viewBox="0 0 9 9"><path d="M0 8l4.500-7L9 8z" fill="#05051e" /></Svg></ScrollButton>
            <ScrollThumb />
            <ScrollTrack />
            <ScrollButton aria-label="Scorri in basso"><Svg $w={9} viewBox="0 0 9 9"><path d="M0 1l4.500 7L9 1z" fill="#05051e" /></Svg></ScrollButton>
          </ScrollBar>

          <Viewport aria-label="Vista 3D">
            <Compass viewBox="965 39 80 100">
              <path d="M980 128l35 7 27-16c-9-13-52-14-62 0z" fill="#142c30" stroke="#d4dcec" strokeWidth="1.500" />
              <path d="M976 87c0-24 17-31 29-24 11-9 28-3 29 17l-25 16z" fill="#0b0838" stroke="#d2d2ee" strokeWidth="1.500" />
              <path d="M1004 54l6 68" stroke="#dcdcf0" strokeWidth="1.500" />
              <circle cx="1004" cy="54" r="3" fill="#d8d8f4" />
              <path d="M1007 120h7v7h-7z" fill="#d40c0c" />
              <g fill="#d2ce70" fontFamily="DejaVu Sans Condensed, sans-serif" fontSize="10">
                <text x="1002" y="49">z</text><text x="1030" y="77">x</text><text x="975" y="84">y</text>
              </g>
            </Compass>
            <Triad viewBox="1057 503 44 30">
              <path d="M1076 528v-14M1076 528l12-6M1076 528l-10-2" stroke="#e4e4e4" fill="none" />
              <g fill="#e8e8e8" fontFamily="DejaVu Sans Condensed, sans-serif" fontSize="10">
                <text x="1074" y="512">z</text><text x="1089" y="523">x</text><text x="1060" y="527">y</text>
              </g>
            </Triad>
            <Palette $right={123} $top={62}>
              <PaletteTitle>Pa...<PaletteClose aria-label="Chiudi"><CloseMark w={6} /></PaletteClose></PaletteTitle>
              <PaletteBody>
                <Grip $size={10} />
                <PaletteTool aria-label="Parametri"><Icon name="params" /></PaletteTool>
                <PaletteRule />
                {['recognise', 'wall', 'wallEdge', 'extrude'].map((n) => <PaletteTool key={n} aria-label={n}><Icon name={n} /></PaletteTool>)}
                <PaletteTool aria-label="bend"><Icon name="bend" /><Drop /></PaletteTool>
              </PaletteBody>
            </Palette>
            <Palette $right={60} $top={144}>
              <PaletteTitle>Pi...<PaletteClose aria-label="Chiudi"><CloseMark w={6} /></PaletteClose></PaletteTitle>
              <PaletteBody>
                <Grip $size={11} />
                <PaletteTool aria-label="bend1"><Icon name="bend1" /><Drop /></PaletteTool>
                <PaletteTool aria-label="bend2"><Icon name="bend2" /></PaletteTool>
                <PaletteTool aria-label="bend3"><Icon name="bend3" /><Drop /></PaletteTool>
                <PaletteTool aria-label="bend4"><Icon name="bend4" /></PaletteTool>
              </PaletteBody>
            </Palette>
          </Viewport>

          <Plate viewBox="0 37 1139 518">
            <path d="M18 37h215l419 106 81 20 9 104L18 82z" fill="#a09fc5" />
            <path d="M233 37h70l363 94-14 11z" fill="#b9b5da" />
            <path d="M244 38h20l389 100-4 3z" fill="#f8ecf4" />
            <path d="M236 37h10l405 104z" fill="#c2a8c4" />
            <g fill="none" stroke="#f08424" strokeWidth="2">
              <path d="M233 37l419 105 81 21 9 104L3 78" strokeLinejoin="round" />
              <path d="M303 37l363 94-14 10" />
              <path d="M264 37l392 99" stroke="#c8805a" strokeWidth="1.500" />
              <path d="M733 163l9 104" strokeWidth="3" />
            </g>
            <ellipse cx="689.500" cy="182" rx="13.500" ry="17" transform="rotate(-32 689.500 182)" fill="#020202" stroke="#f08424" strokeWidth="2.500" />
            {[[287, 61], [290, 84], [490, 168], [598, 141], [600, 164], [655, 173], [724, 191], [604, 198]].map(([x, y]) => (
              <g key={`${x}-${y}`}><circle cx={x} cy={y} r="3.500" fill="#e8883c" /><ellipse cx={x} cy={y} rx="1.300" ry="2" transform={`rotate(-30 ${x} ${y})`} fill="#200a04" /></g>
            ))}
          </Plate>

          <TreeLayer>
            <Tree>
              {nodes.map((n, i) => <TreeItem key={i} node={n} />)}
            </Tree>
          </TreeLayer>

          <ContextMenu role="menu">
            {entries.map((e, i) => e === null ? <Rule key={i} /> : (
              <MenuItem key={i} role="menuitem" $active={e.active} disabled={e.off}>
                <IconSlot>{e.icon && <Icon name={e.icon} w={17} />}</IconSlot>
                <span>{e.text}</span>
                {e.keys && <Shortcut>{e.keys}</Shortcut>}
                {e.sub && <Submenu><Svg $w={4} $h={7} viewBox="0 0 4 7"><path d="M0 0l4 3.500L0 7z" fill="#111" /></Svg></Submenu>}
              </MenuItem>
            ))}
          </ContextMenu>

          <SideBar>
            {sideGroups.map((g, i) => (
              <React.Fragment key={i}>
                <Grip $size={i === 0 ? 8 : 15} />
                <ToolSet items={g} />
              </React.Fragment>
            ))}
            <Grip $size={14} />
          </SideBar>
        </Workspace>

        <BottomBar>
          <Divider $w={10} />
          {bottomGroups.map((g, i) => (
            <React.Fragment key={i}>
              {i > 0 && <Divider />}
              <ToolSet items={g} />
            </React.Fragment>
          ))}
          <More>»</More>
          <DsLogo viewBox="0 0 38 28" aria-label="CATIA">
            <path d="M8 1h7c2 0 1 2-4 4 4 0 4 3 0 5" fill="none" stroke="#d8242c" strokeWidth="1.600" />
            <path d="M5 11c10-2 10 7-2 9l5-7" fill="none" stroke="#2a3a98" strokeWidth="1.800" />
            <path d="M22 6c-6-1-7 3-4 6s2 7-5 6" fill="none" stroke="#f07a2a" strokeWidth="2.200" />
            <text x="8" y="26" fontFamily="Liberation Sans, sans-serif" fontWeight="700" fontStyle="italic" fontSize="8" fill="#2b2f7a">CATIA</text>
          </DsLogo>
        </BottomBar>

        <StatusBar>
          <StatusText htmlFor="power">Imposta l'oggetto selezionato come oggetto di lavoro.</StatusText>
          <PowerInput id="power" type="text" />
          <StatusButton aria-label="Finestra comandi"><Svg $w={13} $h={11} viewBox="0 0 13 11"><path d="M1 1h7v7H1zM10 8v2H3M11 9h2" fill="none" stroke="#8f8ea4" /></Svg></StatusButton>
          <StatusButton aria-label="Immagini"><Svg $w={13} $h={11} viewBox="0 0 13 11"><path d="M1 2h5v7H1zM8 1h3v8H8zM3 4h6M12 9V3" fill="none" stroke="#8f8ea4" /></Svg></StatusButton>
        </StatusBar>

        <TaskBar>
          <Launcher $w={32} aria-label="Start">
            <Svg $w={31} viewBox="0 0 31 31">
              <defs><radialGradient id="orb" cx=".5" cy=".9" r=".9"><stop offset="0" stopColor="#5fc4f0" /><stop offset=".6" stopColor="#1d568a" /><stop offset="1" stopColor="#a8c4d8" /></radialGradient></defs>
              <circle cx="15.500" cy="15.500" r="14.500" fill="url(#orb)" stroke="#8aa8bc" />
              <path d="M7 9c3-2 5-2 8 0l-1 6c-3-2-5-2-8 0z" fill="#e8602a" />
              <path d="M16 9c3 2 5 2 8 0l-1 6c-3 2-5 2-8 0z" fill="#8cc63a" />
              <path d="M6 16c3-2 5-2 8 0l-1 6c-3-2-5-2-8 0z" fill="#4a9ae8" />
              <path d="M15 17c3 2 5 2 8 0l-1 6c-3 2-5 2-8 0z" fill="#f8c83a" />
            </Svg>
          </Launcher>
          <Launcher $w={74} aria-label="HP">
            <Svg $w={26} viewBox="0 0 26 26">
              <circle cx="13" cy="13" r="12" fill="#25415e" stroke="#8ba2b8" />
              <path d="M6 17l4-12M8 12c4-3 4 0 2 5M12 21l4-11c5-1 3 7-2 7" fill="none" stroke="#fff" strokeWidth="1.600" />
              <path d="M16 17l4-2 5 2c0 4-2 7-5 8-3-1-4-4-4-8z" fill="#e8d04a" stroke="#dce8f4" />
              <path d="M16 17l4-2v5h-4zM20 20h5c-1 3-3 5-5 5z" fill="#3a7ac8" />
            </Svg>
          </Launcher>
          <Launcher $w={24} aria-label="Media Player">
            <Svg $w={22} viewBox="0 0 22 22">
              <rect x="5" y="2" width="16" height="18" fill="#6fb4d8" /><rect x="1" y="1" width="16" height="20" fill="#a8d0e4" stroke="#5a8aa8" />
              <circle cx="10" cy="11" r="7.500" fill="#f08a2a" stroke="#fff" /><path d="M7.500 6.500l7 4.500-7 4.500z" fill="#fff" />
            </Svg>
          </Launcher>
          <TaskGap />
          <TaskButton>
            <Svg $w={24} viewBox="0 0 24 24"><path d="M2 1l9 1v20l-9-2z" fill="#f8e9a0" stroke="#c0a848" /><path d="M11 2l2 1v19l-2 1zM13 5h5v16h-5z" fill="#ecd478" stroke="#b89a3c" /></Svg>
            VerificaFiancata Li...
          </TaskButton>
          <Launcher $w={56} aria-label="Immagini">
            <Svg $w={26} viewBox="0 0 26 26"><path d="M2 3h14v14H2z" fill="#e8b858" stroke="#f6f0e0" /><path d="M9 2h15v16H9z" fill="#f4dcc8" stroke="#fff" strokeWidth="1.500" /><path d="M6 12c1-5 4-7 9-7 5 1 6 5 4 10-4 3-10 3-13-3z" fill="#d8481e" /><path d="M11 6l3 5 5-3" fill="none" stroke="#f8b060" strokeWidth="1.500" /><path d="M1 17c6 8 14 8 18 4l-6-1c-4 0-8-1-12-3z" fill="#f0a850" /></Svg>
          </Launcher>
          <Launcher $w={46} aria-label="Chrome">
            <Svg $w={24} viewBox="0 0 24 24"><circle cx="12" cy="12" r="11.500" fill="#4caf50" /><path d="M2 6a11.500 11.500 0 0 1 20.500 1H12z" fill="#e0402f" /><path d="M22.500 7A11.500 11.500 0 0 1 12 23.500L17 14l-3-7z" fill="#f8cf3a" /><circle cx="12" cy="12" r="5.300" fill="#fff" /><circle cx="12" cy="12" r="4.200" fill="#4688d8" /></Svg>
          </Launcher>
          <TaskGap $w={4} />
          <TaskButton $active>
            <CatiaLogo w={24} />
            CATIA V5 - [Fianc...
          </TaskButton>
          <Tray>
            <TrayItem $w={16}>IT</TrayItem>
            <TrayItem $w={42}>
              <Svg $w={27} viewBox="0 0 27 27"><circle cx="13.500" cy="13.500" r="12.500" fill="#164a86" stroke="#a8c8e0" strokeWidth="1.500" /><path d="M9 10.500c0-6 9.500-5.500 9.500-.5 0 4-4.500 3.500-4.500 7" fill="none" stroke="#fff" strokeWidth="3.500" /><circle cx="14" cy="20.500" r="2" fill="#fff" /></Svg>
            </TrayItem>
            {trayArt.map((a, i) => <TrayItem key={i}><Svg $w={14} viewBox="0 0 16 16">{a}</Svg></TrayItem>)}
            <Clock>09:41<br />12/04/2015</Clock>
            <ShowDesktop aria-label="Mostra desktop" />
          </Tray>
        </TaskBar>
      </Shell>
    </>
  );
}
